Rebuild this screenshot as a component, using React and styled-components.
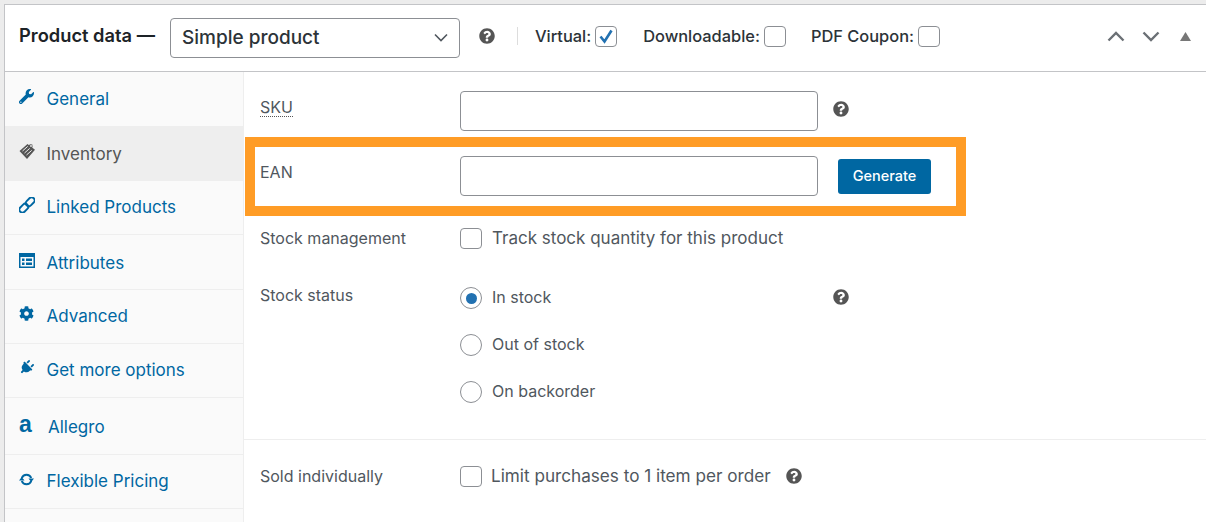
import React from "react";
import styled, { createGlobalStyle } from "styled-components";
import { FaWrench, FaCog, FaPlug, FaQuestionCircle } from "react-icons/fa";

const Global = createGlobalStyle`
  html, body { margin: 0; padding: 0; background: #ececec; height: 522px; overflow: hidden; }
  * { box-sizing: border-box; }
  body { font-family: Inter, "Noto Sans", sans-serif; color: #50575e; }
`;

const Page = styled.div`
  padding: 4px 0 0 4px;
  width: 1206px;
  height: 522px;
  overflow: hidden;
`;
const Panel = styled.div`
  background: #fff;
  border: 1px solid #c3c4c7;
  border-right: none;
  border-bottom: none;
  height: 518px;
  display: flex;
  flex-direction: column;
`;
const Header = styled.div`
  height: 67px;
  flex: none;
  border-bottom: 1px solid #c3c4c7;
  display: flex;
  align-items: center;
  padding: 0 15px 4px 14px;
`;
const Title = styled.span`
  font-size: 18.3px;
  font-weight: 600;
  color: #1d2327;
  width: 151px;
  flex: none;
  margin-top: -2px;
  white-space: nowrap;
`;
const SelectBox = styled.div`
  width: 290px;
  height: 40px;
  flex: none;
  margin-top: 3px;
  border: 1px solid #8c8f94;
  border-radius: 4px;
  display: flex;
  align-items: center;
  justify-content: space-between;
  padding: 0 11px;
  font-size: 19px;
  font-weight: 500;
  color: #2c3338;
`;
const Help = styled(FaQuestionCircle)`
  font-size: 16px;
  color: #555;
  flex: none;
  margin-left: ${(p) => p.$ml || 0}px;
  margin-top: ${(p) => p.$mt || 0}px;
`;
const Sep = styled.span`
  width: 1px;
  height: 18px;
  background: #ddd;
  flex: none;
  margin: 0 17px 0 22px;
`;
const Opt = styled.label`
  display: flex;
  align-items: center;
  gap: 4px;
  font-size: 16.4px;
  font-weight: 500;
  color: #2c3338;
  margin-right: ${(p) => p.$mr}px;
  white-space: nowrap;
`;
const Box = styled.span`
  width: 22px;
  height: 21px;
  flex: none;
  display: inline-flex;
  align-items: center;
  justify-content: center;
  border: 1px solid #8c8f94;
  border-radius: 4px;
  background: #fff;
`;
const Actions = styled.div`
  margin-left: auto;
  display: flex;
  align-items: center;
`;
const ActionIcon = styled.svg`
  display: block;
  margin-left: ${(p) => p.$ml || 0}px;
`;
const Body = styled.div`
  flex: 1;
  display: flex;
  min-height: 0;
`;
const Side = styled.nav`
  width: 239px;
  flex: none;
  background: #fafafa;
  border-right: 1px solid #eee;
`;
const Tab = styled.div`
  height: ${(p) => p.$h}px;
  display: flex;
  align-items: center;
  padding: ${(p) => p.$pt || 0}px 0 ${(p) => p.$pb || 0}px 14px;
  font-size: 17px;
  color: ${(p) => (p.$active ? "#555" : "#0067a2")};
  background: ${(p) => (p.$active ? "#eee" : "transparent")};
  border-bottom: 1px solid ${(p) => (p.$line ? "#eee" : "transparent")};
`;
const TabIcon = styled.span`
  width: 27.5px;
  flex: none;
  display: flex;
  margin-top: -4px;
  font-size: 15px;
  color: ${(p) => (p.$active ? "#555" : "#0067a2")};
`;
const Letter = styled.span`
  width: 29px;
  flex: none;
  font-family: "Liberation Sans", sans-serif;
  font-weight: 700;
  font-size: 23px;
  line-height: 1;
  margin-top: -5px;
`;
const Main = styled.div`
  flex: 1;
  padding-top: 19px;
  min-width: 0;
`;
const SkuRow = styled.div`
  display: flex;
  align-items: flex-start;
  padding-left: 16px;
  height: 46px;
`;
const Label = styled.span`
  width: 200px;
  flex: none;
  font-size: 16px;
  color: #50575e;
  padding-top: ${(p) => p.$pt || 0}px;
`;
const Dotted = styled.span`
  border-bottom: 1px dotted #555;
  line-height: 17px;
  display: inline-block;
`;
const Input = styled.div`
  width: 358px;
  height: 40px;
  flex: none;
  border: 1px solid #8c8f94;
  border-radius: 4px;
  background: #fff;
`;
const Highlight = styled.div`
  width: 721px;
  height: 79px;
  margin-left: 1px;
  border: 10px solid #ff9c26;
  display: flex;
  align-items: flex-start;
  padding: 9px 0 0 5px;
`;
const Generate = styled.button`
  width: 93px;
  height: 35px;
  margin: 3px 0 0 20px;
  padding: 0 0 2px;
  border: none;
  border-radius: 3px;
  background: #0067a2;
  color: #fff;
  font: 500 14.5px Inter, sans-serif;
`;
const CheckRow = styled.div`
  display: flex;
  align-items: center;
  height: 22px;
  padding-left: 16px;
  margin-top: ${(p) => p.$mt}px;
`;
const Text = styled.span`
  font-size: ${(p) => p.$size || 16}px;
  color: #50575e;
  margin-left: ${(p) => p.$ml || 10}px;
  margin-top: ${(p) => p.$mt ?? -1}px;
  white-space: nowrap;
`;
const Radio = styled.span`
  width: 22px;
  height: 22px;
  flex: none;
  border-radius: 50%;
  border: 1px solid #8c8f94;
  display: inline-flex;
  align-items: center;
  justify-content: center;
  &::after {
    content: "";
    display: ${(p) => (p.$on ? "block" : "none")};
    width: 11px;
    height: 11px;
    border-radius: 50%;
    background: #2271b1;
  }
`;
const StockLabel = styled.span`
  width: 200px;
  flex: none;
  font-size: 16px;
  color: #50575e;
  margin-top: -7px;
`;
const Spacer = styled.span`
  width: ${(p) => p.$w}px;
  flex: none;
`;
const Divider = styled.div`
  height: 1px;
  background: #eee;
  margin-top: 36px;
`;

const InventoryIcon = () => (
  <svg width="17" height="17" viewBox="0 0 17 17">
    <path fill="#555" d="M0.5 8 8.5 1l1.5 1.2.9-.9 2.4.2.3 2.4-.5.6L16 6.8 8 16z" />
    <path stroke="#eee" strokeWidth="1" fill="none" d="M3.5 8 8.7 3.4M5.5 10 10.7 5.4M7.5 12 12.7 7.4" />
    <circle cx="12" cy="3" r=".9" fill="#eee" />
  </svg>
);
const AttributesIcon = () => (
  <svg width="16" height="15" viewBox="0 0 16 15">
    <path fill="#0067a2" d="M0 0h16v15H0z" />
    <path fill="#fafafa" d="M1.5 4h13v9.5h-13z" />
    <path fill="#0067a2" d="M3 5.5h2.5v2.5H3zM3 9.5h2.5V12H3zM7 5.5h6V8H7zM7 9.5h6V12H7z" />
  </svg>
);
const LinkIcon = () => (
  <svg width="16" height="16" viewBox="0 0 16 16">
    <g transform="rotate(-45 8 8)" fill="none" stroke="#0067a2" strokeWidth="1.9">
      <rect x="-1.5" y="5" width="10" height="6" rx="3" />
      <rect x="7.5" y="5" width="10" height="6" rx="3" />
    </g>
  </svg>
);
const UpdateIcon = () => (
  <svg width="15" height="13" viewBox="0 0 15 13" style={{ marginTop: 2 }}>
    <path d="M2.8 5A5 5 0 0 1 12.2 5M2.8 8A5 5 0 0 0 12.2 8" fill="none" stroke="#0067a2" strokeWidth="2" />
    <path d="M9.5 5.5H15L12.25 9zM0 7.5H5.5L2.75 4z" fill="#0067a2" />
  </svg>
);
const tabs = [
  { label: "General", icon: <FaWrench />, h: 54 },
  { label: "Inventory", icon: <InventoryIcon />, h: 55, active: true, pt: 1 },
  { label: "Linked Products", icon: <LinkIcon />, h: 54, line: true, pb: 2 },
  { label: "Attributes", icon: <AttributesIcon />, h: 55, line: true, pt: 1 },
  { label: "Advanced", icon: <FaCog />, h: 54, line: true, pb: 2 },
  { label: "Get more options", icon: <FaPlug style={{ transform: "rotate(45deg)" }} />, h: 54, line: true, pb: 2 },
  { label: "Allegro", letter: "a", h: 57, line: true, pt: 2 },
  { label: "Flexible Pricing", icon: <UpdateIcon />, h: 54, line: true, pb: 2 },
];

export default function App() {
  return (
    <Page>
      <Global />
      <Panel>
        <Header>
          <Title>Product data —</Title>
          <SelectBox>
            Simple product
            <svg width="14" height="9" viewBox="0 0 14 9"><path d="M1 1.5l6 6 6-6" fill="none" stroke="#50575e" strokeWidth="1.6" /></svg>
          </SelectBox>
          <Help $ml={19} />
          <Sep />
          <Opt $mr={26}>Virtual:
            <Box>
              <svg width="18" height="17" viewBox="0 0 18 17"><path d="M3.5 8.5l4 5L14.5 2.5" fill="none" stroke="#2271b1" strokeWidth="2.6" /></svg>
            </Box>
          </Opt>
          <Opt $mr={25}>Downloadable:<Box /></Opt>
          <Opt $mr={0}>PDF Coupon:<Box /></Opt>
          <Actions>
            <ActionIcon width="18" height="11" viewBox="0 0 18 11"><path d="M1.5 9.5L9 2l7.5 7.5" fill="none" stroke="#6b7075" strokeWidth="2.4" /></ActionIcon>
            <ActionIcon $ml={17} width="18" height="11" viewBox="0 0 18 11"><path d="M1.5 1.5L9 9l7.5-7.5" fill="none" stroke="#6b7075" strokeWidth="2.4" /></ActionIcon>
            <ActionIcon $ml={20} width="11" height="9" viewBox="0 0 11 9"><path d="M5.5 0L11 9H0z" fill="#777" /></ActionIcon>
          </Actions>
        </Header>
        <Body>
          <Side>
            {tabs.map((t) => (
              <Tab key={t.label} $h={t.h} $active={t.active} $line={t.line} $pb={t.pb} $pt={t.pt}>
                {t.letter ? <Letter>{t.letter}</Letter> : <TabIcon $active={t.active}>{t.icon}</TabIcon>}
                {t.label}
              </Tab>
            ))}
          </Side>
          <Main>
            <SkuRow>
              <Label $pt={6}><Dotted>SKU</Dotted></Label>
              <Input />
              <Help $ml={15} $mt={10} />
            </SkuRow>
            <Highlight>
              <Label $pt={6}>EAN</Label>
              <Input />
              <Generate>Generate</Generate>
            </Highlight>
            <CheckRow $mt={11}>
              <Label>Stock management</Label>
              <Box />
              <Text $size={17}>Track stock quantity for this product</Text>
            </CheckRow>
            <CheckRow $mt={38}>
              <StockLabel>Stock status</StockLabel>
              <Radio $on />
              <Text $mt={-3}>In stock</Text>
              <Spacer $w={282} />
              <Help $mt={-2} />
            </CheckRow>
            <CheckRow $mt={25}>
              <Spacer $w={200} />
              <Radio />
              <Text $mt={-3}>Out of stock</Text>
            </CheckRow>
            <CheckRow $mt={25}>
              <Spacer $w={200} />
              <Radio />
              <Text $mt={-3}>On backorder</Text>
            </CheckRow>
            <Divider />
            <CheckRow $mt={25}>
              <Label>Sold individually</Label>
              <Box />
              <Text $ml={9} $size={17.15}>Limit purchases to 1 item per order</Text>
              <Help $ml={15} />
            </CheckRow>
          </Main>
        </Body>
      </Panel>
    </Page>
  );
}
